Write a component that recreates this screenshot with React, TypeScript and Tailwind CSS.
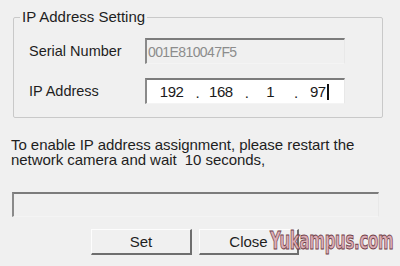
const sunken =
  "border-t-2 border-l-2 border-b border-r border-t-[#7c7c7c] border-l-[#8a8a8a] border-b-[#f4f4f4] border-r-[#e8e8e8]";

const raised =
  "border-t border-l border-b-2 border-r-2 border-t-[#fdfdfd] border-l-[#fdfdfd] border-b-[#6e6e6e] border-r-[#6e6e6e]";

function Segment({ value, dot }: { value: string; dot: boolean }) {
  return (
    <div className="relative flex items-center justify-center">
      <span>{value}</span>
      {dot && <span className="absolute right-[-3px] top-[4px]">.</span>}
    </div>
  );
}

export default function App() {
  return (
    <div className="relative h-[266px] w-[400px] overflow-hidden bg-[#f0f0f0] pt-[8px] font-['Liberation_Sans',Arial,sans-serif] text-[14.5px] leading-[18px] text-[#1e1e1e]">
      <fieldset className="ml-[13px] w-[370px] rounded-[2px] border border-[#c9c9c9] pb-[13px] pt-[12px]">
        <legend className="ml-[6px] px-[2px] text-[15px]">IP Address Setting</legend>
        <div className="flex items-center pl-[15px]">
          <span className="w-[116px]">Serial Number</span>
          <div
            className={`flex h-[26px] w-[200px] items-center bg-[#f0f0f0] pl-[1px] text-[14px] tracking-[-0.6px] text-[#8c8c8c] ${sunken}`}
          >
            001E810047F5
          </div>
        </div>
        <div className="mt-[14px] flex items-center pl-[15px]">
          <span className="w-[116px]">IP Address</span>
          <div
            className={`grid h-[26px] w-[200px] grid-cols-4 bg-white text-[15px] tracking-[-0.5px] text-[#1a1a1a] ${sunken}`}
          >
            <Segment value="192" dot />
            <Segment value="168" dot />
            <Segment value="1" dot />
            <div className="flex items-center justify-center">
              <span>97</span>
              <span className="ml-[1px] h-[16px] w-[2px] bg-[#111]" />
            </div>
          </div>
        </div>
      </fieldset>

      <p className="ml-[11px] mt-[19px] text-[15px] leading-[15px] tracking-[-0.05px]">
        To enable IP address assignment, please restart the
        <br />
        network camera and wait &nbsp;10 seconds,
      </p>

      <div className={`ml-[12px] mt-[25px] h-[25px] w-[367px] bg-[#f0f0f0] ${sunken}`} />

      <div className="ml-[91px] mt-[12px] flex gap-[7px]">
        <button className={`h-[26px] w-[101px] bg-[#f0f0f0] text-[15px] ${raised}`}>Set</button>
        <button className={`h-[26px] w-[100px] bg-[#f0f0f0] text-[15px] ${raised}`}>Close</button>
      </div>

      <span className="absolute left-[270px] top-[226px] origin-left scale-x-[0.6] whitespace-nowrap font-['DejaVu_Sans',sans-serif] text-[25px] font-bold leading-[30px] tracking-[-0.5px] text-[#dcaab2] opacity-95 [-webkit-text-stroke:1px_#6a3640]">
        Yukampus.com
      </span>
    </div>
  );
}
